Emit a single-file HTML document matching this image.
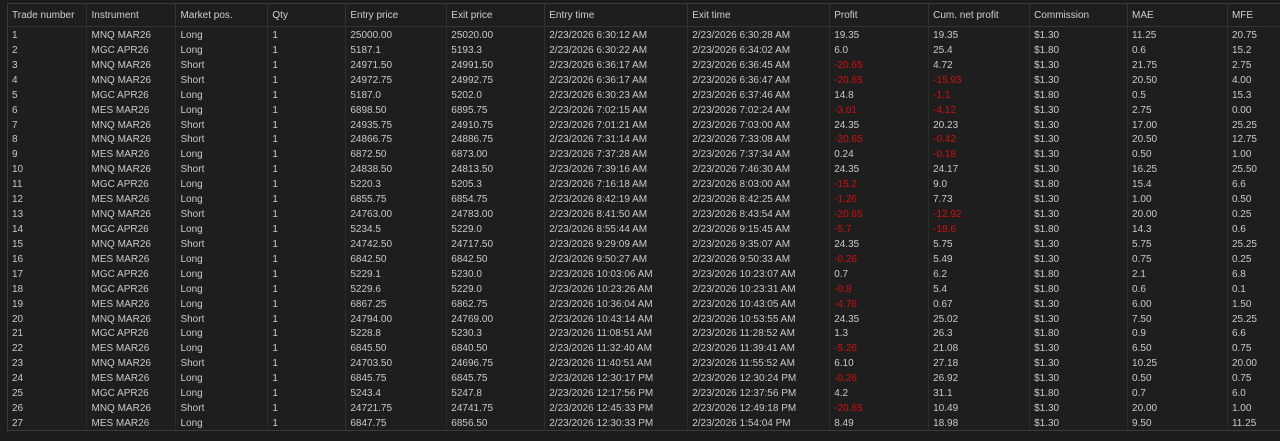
<!DOCTYPE html>
<html><head><style>
body{margin:0;background:#1c1c1c;width:1280px;height:441px;overflow:hidden;font-family:"Liberation Sans",sans-serif;font-size:10px;color:#c9c9c9}
.wrap{position:absolute;left:7px;top:3px;width:1300px;height:426px;border:1px solid #3a3a3a;border-right:none;background:#1e1e1e;overflow:hidden}
table{border-collapse:collapse;table-layout:fixed;position:absolute;left:0;top:0;height:426px}
td,th{padding:0 0 0 4px;white-space:nowrap;overflow:hidden;text-align:left;font-weight:normal;vertical-align:top}
th{height:21px;line-height:21px;padding-top:1px;box-sizing:border-box;border-right:1px solid #333;border-bottom:1px solid #333;color:#cfcfcf}
td{height:14.92px;line-height:14.92px;border-right:1px solid #2c2c2c}
tr.f td{padding-top:2px}
tr.last td{height:auto}
.r{color:#d01010}
</style></head><body><div class="wrap"><table>
<colgroup><col style="width:79px"><col style="width:89px"><col style="width:92px"><col style="width:78px"><col style="width:101px"><col style="width:98px"><col style="width:143px"><col style="width:142px"><col style="width:99px"><col style="width:101px"><col style="width:98px"><col style="width:100px"><col style="width:80px"></colgroup>
<tr><th>Trade number</th><th>Instrument</th><th>Market pos.</th><th>Qty</th><th>Entry price</th><th>Exit price</th><th>Entry time</th><th>Exit time</th><th>Profit</th><th>Cum. net profit</th><th>Commission</th><th>MAE</th><th>MFE</th></tr>
<tr class="f"><td>1</td><td>MNQ MAR26</td><td>Long</td><td>1</td><td>25000.00</td><td>25020.00</td><td>2/23/2026 6:30:12 AM</td><td>2/23/2026 6:30:28 AM</td><td>19.35</td><td>19.35</td><td>$1.30</td><td>11.25</td><td>20.75</td></tr>
<tr><td>2</td><td>MGC APR26</td><td>Long</td><td>1</td><td>5187.1</td><td>5193.3</td><td>2/23/2026 6:30:22 AM</td><td>2/23/2026 6:34:02 AM</td><td>6.0</td><td>25.4</td><td>$1.80</td><td>0.6</td><td>15.2</td></tr>
<tr><td>3</td><td>MNQ MAR26</td><td>Short</td><td>1</td><td>24971.50</td><td>24991.50</td><td>2/23/2026 6:36:17 AM</td><td>2/23/2026 6:36:45 AM</td><td class="r">-20.65</td><td>4.72</td><td>$1.30</td><td>21.75</td><td>2.75</td></tr>
<tr><td>4</td><td>MNQ MAR26</td><td>Short</td><td>1</td><td>24972.75</td><td>24992.75</td><td>2/23/2026 6:36:17 AM</td><td>2/23/2026 6:36:47 AM</td><td class="r">-20.65</td><td class="r">-15.93</td><td>$1.30</td><td>20.50</td><td>4.00</td></tr>
<tr><td>5</td><td>MGC APR26</td><td>Long</td><td>1</td><td>5187.0</td><td>5202.0</td><td>2/23/2026 6:30:23 AM</td><td>2/23/2026 6:37:46 AM</td><td>14.8</td><td class="r">-1.1</td><td>$1.80</td><td>0.5</td><td>15.3</td></tr>
<tr><td>6</td><td>MES MAR26</td><td>Long</td><td>1</td><td>6898.50</td><td>6895.75</td><td>2/23/2026 7:02:15 AM</td><td>2/23/2026 7:02:24 AM</td><td class="r">-3.01</td><td class="r">-4.12</td><td>$1.30</td><td>2.75</td><td>0.00</td></tr>
<tr><td>7</td><td>MNQ MAR26</td><td>Short</td><td>1</td><td>24935.75</td><td>24910.75</td><td>2/23/2026 7:01:21 AM</td><td>2/23/2026 7:03:00 AM</td><td>24.35</td><td>20.23</td><td>$1.30</td><td>17.00</td><td>25.25</td></tr>
<tr><td>8</td><td>MNQ MAR26</td><td>Short</td><td>1</td><td>24866.75</td><td>24886.75</td><td>2/23/2026 7:31:14 AM</td><td>2/23/2026 7:33:08 AM</td><td class="r">-20.65</td><td class="r">-0.42</td><td>$1.30</td><td>20.50</td><td>12.75</td></tr>
<tr><td>9</td><td>MES MAR26</td><td>Long</td><td>1</td><td>6872.50</td><td>6873.00</td><td>2/23/2026 7:37:28 AM</td><td>2/23/2026 7:37:34 AM</td><td>0.24</td><td class="r">-0.18</td><td>$1.30</td><td>0.50</td><td>1.00</td></tr>
<tr><td>10</td><td>MNQ MAR26</td><td>Short</td><td>1</td><td>24838.50</td><td>24813.50</td><td>2/23/2026 7:39:16 AM</td><td>2/23/2026 7:46:30 AM</td><td>24.35</td><td>24.17</td><td>$1.30</td><td>16.25</td><td>25.50</td></tr>
<tr><td>11</td><td>MGC APR26</td><td>Long</td><td>1</td><td>5220.3</td><td>5205.3</td><td>2/23/2026 7:16:18 AM</td><td>2/23/2026 8:03:00 AM</td><td class="r">-15.2</td><td>9.0</td><td>$1.80</td><td>15.4</td><td>6.6</td></tr>
<tr><td>12</td><td>MES MAR26</td><td>Long</td><td>1</td><td>6855.75</td><td>6854.75</td><td>2/23/2026 8:42:19 AM</td><td>2/23/2026 8:42:25 AM</td><td class="r">-1.26</td><td>7.73</td><td>$1.30</td><td>1.00</td><td>0.50</td></tr>
<tr><td>13</td><td>MNQ MAR26</td><td>Short</td><td>1</td><td>24763.00</td><td>24783.00</td><td>2/23/2026 8:41:50 AM</td><td>2/23/2026 8:43:54 AM</td><td class="r">-20.65</td><td class="r">-12.92</td><td>$1.30</td><td>20.00</td><td>0.25</td></tr>
<tr><td>14</td><td>MGC APR26</td><td>Long</td><td>1</td><td>5234.5</td><td>5229.0</td><td>2/23/2026 8:55:44 AM</td><td>2/23/2026 9:15:45 AM</td><td class="r">-5.7</td><td class="r">-18.6</td><td>$1.80</td><td>14.3</td><td>0.6</td></tr>
<tr><td>15</td><td>MNQ MAR26</td><td>Short</td><td>1</td><td>24742.50</td><td>24717.50</td><td>2/23/2026 9:29:09 AM</td><td>2/23/2026 9:35:07 AM</td><td>24.35</td><td>5.75</td><td>$1.30</td><td>5.75</td><td>25.25</td></tr>
<tr><td>16</td><td>MES MAR26</td><td>Long</td><td>1</td><td>6842.50</td><td>6842.50</td><td>2/23/2026 9:50:27 AM</td><td>2/23/2026 9:50:33 AM</td><td class="r">-0.26</td><td>5.49</td><td>$1.30</td><td>0.75</td><td>0.25</td></tr>
<tr><td>17</td><td>MGC APR26</td><td>Long</td><td>1</td><td>5229.1</td><td>5230.0</td><td>2/23/2026 10:03:06 AM</td><td>2/23/2026 10:23:07 AM</td><td>0.7</td><td>6.2</td><td>$1.80</td><td>2.1</td><td>6.8</td></tr>
<tr><td>18</td><td>MGC APR26</td><td>Long</td><td>1</td><td>5229.6</td><td>5229.0</td><td>2/23/2026 10:23:26 AM</td><td>2/23/2026 10:23:31 AM</td><td class="r">-0.8</td><td>5.4</td><td>$1.80</td><td>0.6</td><td>0.1</td></tr>
<tr><td>19</td><td>MES MAR26</td><td>Long</td><td>1</td><td>6867.25</td><td>6862.75</td><td>2/23/2026 10:36:04 AM</td><td>2/23/2026 10:43:05 AM</td><td class="r">-4.76</td><td>0.67</td><td>$1.30</td><td>6.00</td><td>1.50</td></tr>
<tr><td>20</td><td>MNQ MAR26</td><td>Short</td><td>1</td><td>24794.00</td><td>24769.00</td><td>2/23/2026 10:43:14 AM</td><td>2/23/2026 10:53:55 AM</td><td>24.35</td><td>25.02</td><td>$1.30</td><td>7.50</td><td>25.25</td></tr>
<tr><td>21</td><td>MGC APR26</td><td>Long</td><td>1</td><td>5228.8</td><td>5230.3</td><td>2/23/2026 11:08:51 AM</td><td>2/23/2026 11:28:52 AM</td><td>1.3</td><td>26.3</td><td>$1.80</td><td>0.9</td><td>6.6</td></tr>
<tr><td>22</td><td>MES MAR26</td><td>Long</td><td>1</td><td>6845.50</td><td>6840.50</td><td>2/23/2026 11:32:40 AM</td><td>2/23/2026 11:39:41 AM</td><td class="r">-5.26</td><td>21.08</td><td>$1.30</td><td>6.50</td><td>0.75</td></tr>
<tr><td>23</td><td>MNQ MAR26</td><td>Short</td><td>1</td><td>24703.50</td><td>24696.75</td><td>2/23/2026 11:40:51 AM</td><td>2/23/2026 11:55:52 AM</td><td>6.10</td><td>27.18</td><td>$1.30</td><td>10.25</td><td>20.00</td></tr>
<tr><td>24</td><td>MES MAR26</td><td>Long</td><td>1</td><td>6845.75</td><td>6845.75</td><td>2/23/2026 12:30:17 PM</td><td>2/23/2026 12:30:24 PM</td><td class="r">-0.26</td><td>26.92</td><td>$1.30</td><td>0.50</td><td>0.75</td></tr>
<tr><td>25</td><td>MGC APR26</td><td>Long</td><td>1</td><td>5243.4</td><td>5247.8</td><td>2/23/2026 12:17:56 PM</td><td>2/23/2026 12:37:56 PM</td><td>4.2</td><td>31.1</td><td>$1.80</td><td>0.7</td><td>6.0</td></tr>
<tr><td>26</td><td>MNQ MAR26</td><td>Short</td><td>1</td><td>24721.75</td><td>24741.75</td><td>2/23/2026 12:45:33 PM</td><td>2/23/2026 12:49:18 PM</td><td class="r">-20.65</td><td>10.49</td><td>$1.30</td><td>20.00</td><td>1.00</td></tr>
<tr class="last"><td>27</td><td>MES MAR26</td><td>Long</td><td>1</td><td>6847.75</td><td>6856.50</td><td>2/23/2026 12:30:33 PM</td><td>2/23/2026 1:54:04 PM</td><td>8.49</td><td>18.98</td><td>$1.30</td><td>9.50</td><td>11.25</td></tr>
</table></div></body></html>
